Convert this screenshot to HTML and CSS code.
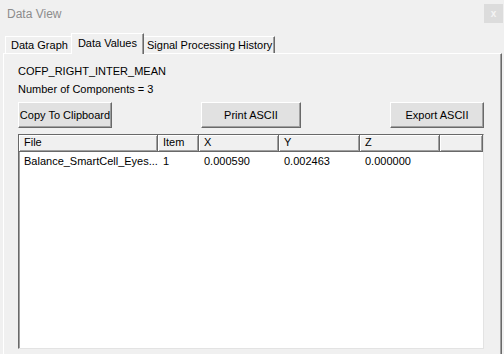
FILE: index.html
```html
<!DOCTYPE html>
<html>
<head>
<meta name="viewport" content="width=device-width, initial-scale=1">
<link rel="stylesheet" href="styles.css">
</head>
<body>

<div class="window">
  <div class="titlebar">
    <span class="title">Data View</span>
    <span class="close">x</span>
  </div>

  <div class="tabs">
    <div class="tab">Data Graph</div>
    <div class="tab active">Data Values</div>
    <div class="tab">Signal Processing History</div>
  </div>

  <div class="panel">
    <div class="label">COFP_RIGHT_INTER_MEAN</div>
    <div class="label">Number of Components = 3</div>

    <div class="buttons">
      <button class="btn">Copy To Clipboard</button>
      <button class="btn">Print ASCII</button>
      <button class="btn">Export ASCII</button>
    </div>

    <!-- list view -->
    <div class="list">
      <div class="head">
        <div class="col c-file">File</div>
        <div class="col c-item">Item</div>
        <div class="col c-x">X</div>
        <div class="col c-y">Y</div>
        <div class="col c-z">Z</div>
        <div class="col c-rest"></div>
      </div>
      <div class="row">
        <div class="cell c-file">Balance_SmartCell_Eyes...</div>
        <div class="cell c-item">1</div>
        <div class="cell c-x">0.000590</div>
        <div class="cell c-y">0.002463</div>
        <div class="cell c-z">0.000000</div>
      </div>
    </div>
  </div>
</div>

</body>
</html>
```

FILE: styles.css
```css
body {
  margin: 0;
  background: #f0f0f0;
  font-family: "Liberation Sans", Arial, sans-serif;
  font-size: 11px;
  color: #000;
  overflow: hidden;
}

.titlebar {
  height: 27px;
  display: flex;
  align-items: center;
  justify-content: space-between;
  padding-left: 7px;
}

.title {
  color: #8c8c8c;
  font-size: 12px;
}

.close {
  width: 19px;
  height: 19px;
  margin: 0 1px 0 0;
  background: #dcdcdc;
  color: #f4f4f4;
  font-weight: bold;
  font-size: 10px;
  display: flex;
  align-items: center;
  justify-content: center;
}

.tabs {
  display: flex;
  align-items: flex-end;
  padding-left: 5px;
  margin-top: 7px;
  height: 19px;
}

.tab {
  height: 16px;
  padding: 0 4px 0 5px;
  line-height: 17px;
  border-top: 1px solid #fff;
  border-left: 1px solid #fff;
  border-right: 1px solid #696969;
  box-shadow: inset -1px 0 0 #a0a0a0;
  white-space: nowrap;
}

.tab:last-child {
  padding: 0 2px 0 4px;
}

.tab.active {
  height: 20px;
  line-height: 18px;
  margin-left: -2px;
  margin-right: -2px;
  padding: 0 6px;
  position: relative;
  z-index: 1;
  background: #f0f0f0;
  margin-bottom: -1px;
}

.panel {
  margin: 0 2px 0 3px;
  height: 292px;
  border-top: 1px solid #fff;
  border-left: 1px solid #fff;
  border-right: 1px solid #696969;
  box-shadow: inset -1px 0 0 #a0a0a0;
  padding: 8px 16px 0 14px;
}

.label {
  height: 18px;
  line-height: 18px;
}

.buttons {
  display: flex;
  justify-content: space-between;
  margin-top: 4px;
  padding-right: 1px;
}

.btn {
  font: inherit;
  color: #000;
  height: 26px;
  padding: 0;
  background: #e1e1e1;
  border: 1px solid;
  border-color: #fff #696969 #696969 #fff;
  box-shadow: inset -1px -1px 0 #a0a0a0;
  white-space: nowrap;
}

.btn:nth-child(1) { width: 94px; }
.btn:nth-child(2) { width: 100px; }
.btn:nth-child(3) { width: 94px; }

.list {
  margin-top: 6px;
  height: 213px;
  width: 464px;
  background: #fff;
  border: 1px solid;
  border-color: #696969 #e3e3e3 #e3e3e3 #696969;
  box-shadow: inset 1px 1px 0 #a0a0a0;
}

.head, .row {
  display: flex;
}

.col {
  height: 17px;
  line-height: 15px;
  padding-left: 5px;
  background: #f0f0f0;
  border-right: 1px solid #696969;
  border-bottom: 1px solid #696969;
  box-shadow: inset 1px 1px 0 #fff, inset -1px -1px 0 #a0a0a0;
  box-sizing: border-box;
}

.cell {
  height: 18px;
  line-height: 18px;
  padding-left: 5px;
  box-sizing: border-box;
  white-space: nowrap;
  overflow: hidden;
}

.c-file { width: 139px; }
.c-item { width: 41px; }
.c-x { width: 80px; }
.c-y { width: 81px; }
.c-z { width: 80px; }
.c-rest { flex: 1; }
```
